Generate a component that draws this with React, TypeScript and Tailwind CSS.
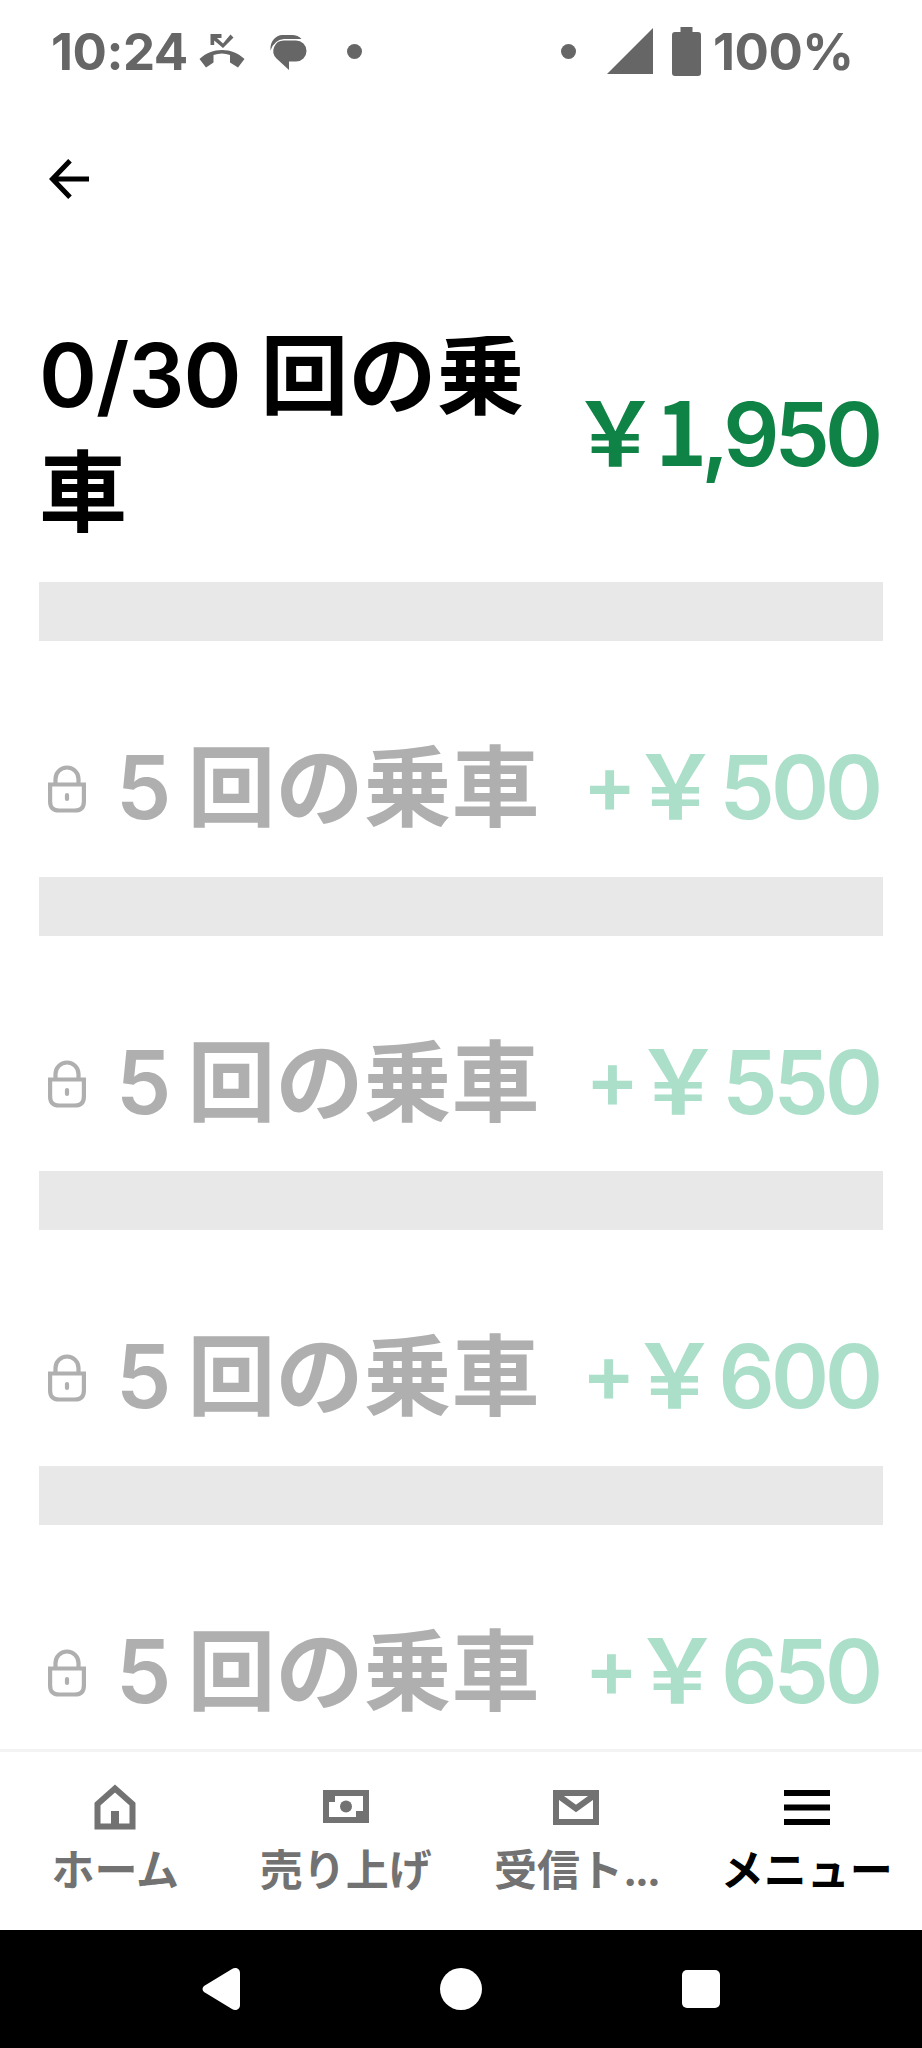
import type { ReactNode } from "react";

interface Tier {
  id: number;
  rides: string;
  amount: string;
}

const tiers: Tier[] = [
  { id: 1, rides: "5 ", amount: "500" },
  { id: 2, rides: "5 ", amount: "550" },
  { id: 3, rides: "5 ", amount: "600" },
  { id: 4, rides: "5 ", amount: "650" },
];

function StatusBar() {
  return (
    <header className="flex h-[102px] items-center pl-[51px] pr-[71px] font-['Inter',sans-serif] text-[51px] font-bold leading-none tracking-[-0.5px] text-[#666666]">
      <span className="w-[148px] whitespace-nowrap">10:24</span>
      <svg className="mt-0.5" width="46" height="36" viewBox="0 0 46 36" fill="currentColor">
        <path d="M11.500 0H22.500V4H18L24 9.500L31.500 0.500L34.500 3.500L24 14L15.200 6.500V11H11.500Z" />
        <path d="M0.500 25C13 13 33 13 45.500 25L39 33.500L31 28.500V21Q23 18 14.500 21V28.500L7 33.500Z" />
      </svg>
      <svg className="ml-[25px] mt-[3px]" width="38" height="36" viewBox="0 0 38 36" fill="currentColor">
        <path d="M0.500 15.500Q0 8 4 4Q8 0 12 0H22Q28 0 31.500 4H14Q4 5 0.500 15.500Z" />
        <path d="M14 5.500H26A10.500 10.500 0 0 1 26 26.500H19V35L6.500 23.500A10.500 10.500 0 0 1 14 5.500Z" />
      </svg>
      <span className="ml-[39px] size-[15px] rounded-full bg-[#666666]" />
      <span className="ml-auto size-[15px] rounded-full bg-[#666666]" />
      <svg className="ml-[31px]" width="46" height="46" viewBox="0 0 46 46" fill="currentColor">
        <path d="M46 0V46H0Z" />
      </svg>
      <svg className="ml-[19px]" width="29" height="49" viewBox="0 0 29 49" fill="currentColor">
        <path d="M8.500 0H20.500V5H26Q29 5 29 8V46Q29 49 26 49H3Q0 49 0 46V8Q0 5 3 5H8.500Z" />
      </svg>
      <span className="ml-3 w-[138px] whitespace-nowrap">100%</span>
    </header>
  );
}

function LockIcon() {
  return (
    <svg width="39" height="48" viewBox="0 0 39 48" fill="none" stroke="currentColor" strokeWidth="4.200">
      <path d="M7.500 18V14A11.500 11.500 0 0 1 30.500 14V18" />
      <path d="M2.100 19.500H35.900V36.500Q35.900 45.500 26.900 45.500H11.100Q2.100 45.500 2.100 36.500Z" />
      <path d="M19 30V34" strokeLinecap="round" />
    </svg>
  );
}

function ProgressBar() {
  return <div className="h-[59px] bg-[#e8e8e8]" />;
}

function TierRow({ data }: { data: Tier }) {
  return (
    <section className="h-[294.500px] pt-[81px]">
      <div className="flex h-[154.500px] items-start justify-between">
        <div className="flex items-start text-[#afafaf]">
          <div className="ml-[9px] mt-[43px] w-[68px]">
            <LockIcon />
          </div>
          <h2 className="whitespace-nowrap text-[88px] font-bold leading-[117px]">
            <span className="whitespace-pre font-['Inter'] font-semibold leading-none tracking-[-1px] [word-spacing:-4px]">
              {data.rides}
            </span>
            回の乗車
          </h2>
        </div>
        <p className="whitespace-nowrap text-[88px] font-bold leading-[117px] text-[#abdfca]">
          <span className="align-[6px] font-['Inter'] text-[80px] font-semibold leading-none tracking-[-5px]">+</span>￥
          <span className="mr-1 font-['Inter'] font-semibold leading-none tracking-[-4px]">{data.amount}</span>
        </p>
      </div>
      <ProgressBar />
    </section>
  );
}

function NavItem({ label, active, children }: { label: ReactNode; active?: boolean; children: ReactNode }) {
  return (
    <a className={`flex flex-1 flex-col items-center pt-[30px] ${active ? "text-black" : "text-[#727272]"}`}>
      <svg width="48" height="50" viewBox="0 0 48 50" fill="none" stroke="currentColor" strokeWidth="6">
        {children}
      </svg>
      <span className="mt-2 whitespace-nowrap font-['Inter','Noto_Sans_CJK_JP',sans-serif] text-[43px] font-bold leading-[61px]">
        {label}
      </span>
    </a>
  );
}

export default function App() {
  return (
    <div className="flex h-[2048px] w-[922px] flex-col overflow-hidden bg-white font-['Noto_Sans_CJK_JP',sans-serif] text-black">
      <StatusBar />
      <div className="h-[234px] pl-[49px] pt-[57px]">
        <svg width="40" height="40" viewBox="0 0 40 40" fill="none" stroke="black" strokeWidth="5">
          <path d="M21 1.800L3.500 20L21 38.200M3 20H40" />
        </svg>
      </div>
      <main className="h-[1413px] overflow-hidden px-[39px]">
        <div className="flex h-[246px] items-start justify-between overflow-hidden">
          <h1 className="-mt-[26px] text-[88px] font-bold leading-[117px]">
            <span className="whitespace-pre font-['Inter'] font-semibold leading-none tracking-[-1px] [word-spacing:-1px]">
              {"0/30 "}
            </span>
            回の乗
            <br />車
          </h1>
          <p className="whitespace-nowrap pt-[33px] text-[88px] font-bold leading-[117px] text-[#0e8345]">
            <span className="tracking-[-4px]">￥</span>
            <span className="tracking-[-6px]">1</span>
            <span className="mr-[5px] font-['Inter'] font-semibold leading-none tracking-[-5px]">,950</span>
          </p>
        </div>
        <ProgressBar />
        {tiers.map((tier) => (
          <TierRow key={tier.id} data={tier} />
        ))}
      </main>
      <nav className="flex h-[181px] border-t-[3px] border-[#f3f3f3]">
        <NavItem label="ホーム">
          <path d="M6.500 44.500V22L24 6.500L41.500 22V44.500Z" />
          <path d="M24 45V29" strokeWidth="8" />
        </NavItem>
        <NavItem label="売り上げ">
          <path d="M4 11H44V38H4Z" />
          <path d="M6 20V13H13V20ZM34 29H42V36H34Z" fill="currentColor" stroke="none" />
          <circle cx="24" cy="24.500" r="6" fill="currentColor" stroke="none" />
        </NavItem>
        <NavItem label={<>受信ト<span className="tracking-[-2.5px]">...</span></>}>
          <path d="M4 11H44V40H4ZM4 12L24 26.500L44 12" />
        </NavItem>
        <NavItem label="メニュー" active>
          <path d="M1 11H47M1 25.500H47M1 40H47" />
        </NavItem>
      </nav>
      <footer className="flex h-[118px] items-center justify-center gap-[200px] bg-black text-white">
        <svg width="38" height="42" viewBox="0 0 38 42" fill="currentColor">
          <path d="M30 1C33 -1 38 0 38 5V37C38 42 33 43 30 41L2 24Q-1 21 2 18Z" />
        </svg>
        <span className="size-[42px] rounded-full bg-white" />
        <span className="size-[38px] rounded-[5px] bg-white" />
      </footer>
    </div>
  );
}
